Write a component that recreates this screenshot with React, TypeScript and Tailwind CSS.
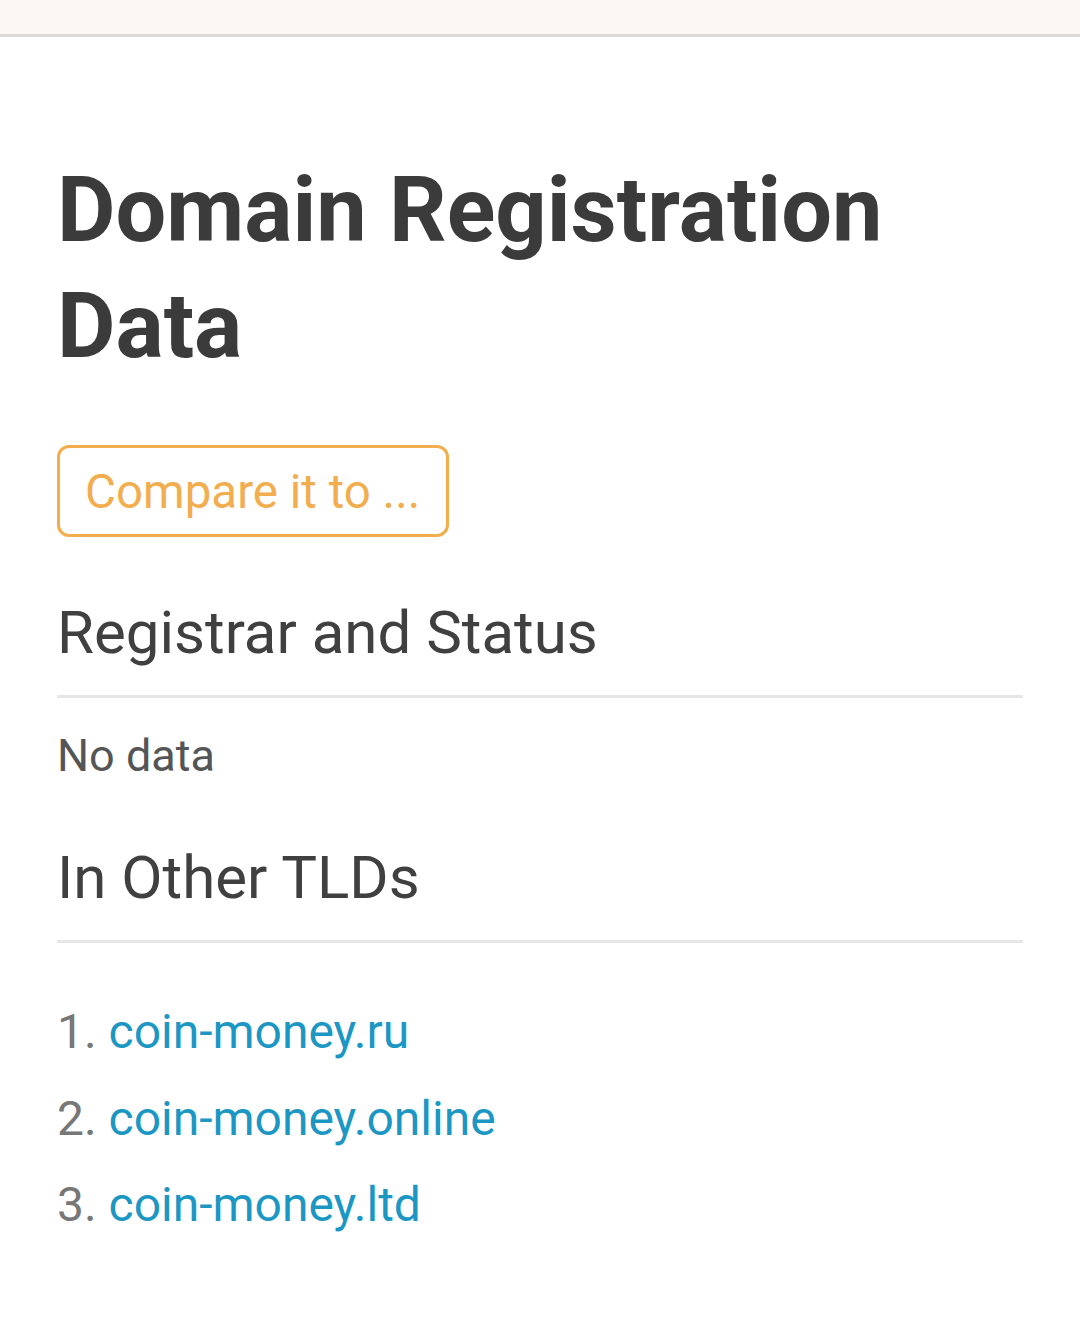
const domains = ['coin-money.ru', 'coin-money.online', 'coin-money.ltd']

export default function App() {
  return (
    <div className="min-h-[1323px] bg-white" style={{ fontFamily: 'Roboto, "Noto Sans", sans-serif' }}>
      {/* top bar */}
      <div className="h-[37px] bg-[#fbf8f3] border-b-[3px] border-[#d9d9d7]" />

      <div className="px-[57px]">
        <h1 className="mt-[116px] text-[90px] leading-[116px] font-bold text-[#3b3b3b]">
          Domain Registration Data
        </h1>

        <button className="mt-[60px] h-[92px] pl-[25px] pr-[26px] pt-[4px] rounded-[12px] border-[3px] border-[#f2ad4f] text-[#f2ad4f] text-[47.5px] leading-none">
          Compare it to ...
        </button>

        <h2 className="mt-[56px] text-[60px] leading-[80px] text-[#404040] pb-[22px] border-b-[3px] border-[#e6e6e6]">
          Registrar and Status
        </h2>
        <p className="mt-[30px] text-[45px] leading-[56px] text-[#555555]">No data</p>

        <h2 className="mt-[54px] text-[60px] leading-[80px] text-[#404040] pb-[22px] border-b-[3px] border-[#e6e6e6]">
          In Other TLDs
        </h2>

        <ol className="mt-[46px] text-[48px] leading-[86.5px] text-[#777777]">
          {domains.map((d, i) => (
            <li key={d}>
              {i + 1}. <a href="#" className="text-[#1c97c3]">{d}</a>
            </li>
          ))}
        </ol>
      </div>
    </div>
  )
}
